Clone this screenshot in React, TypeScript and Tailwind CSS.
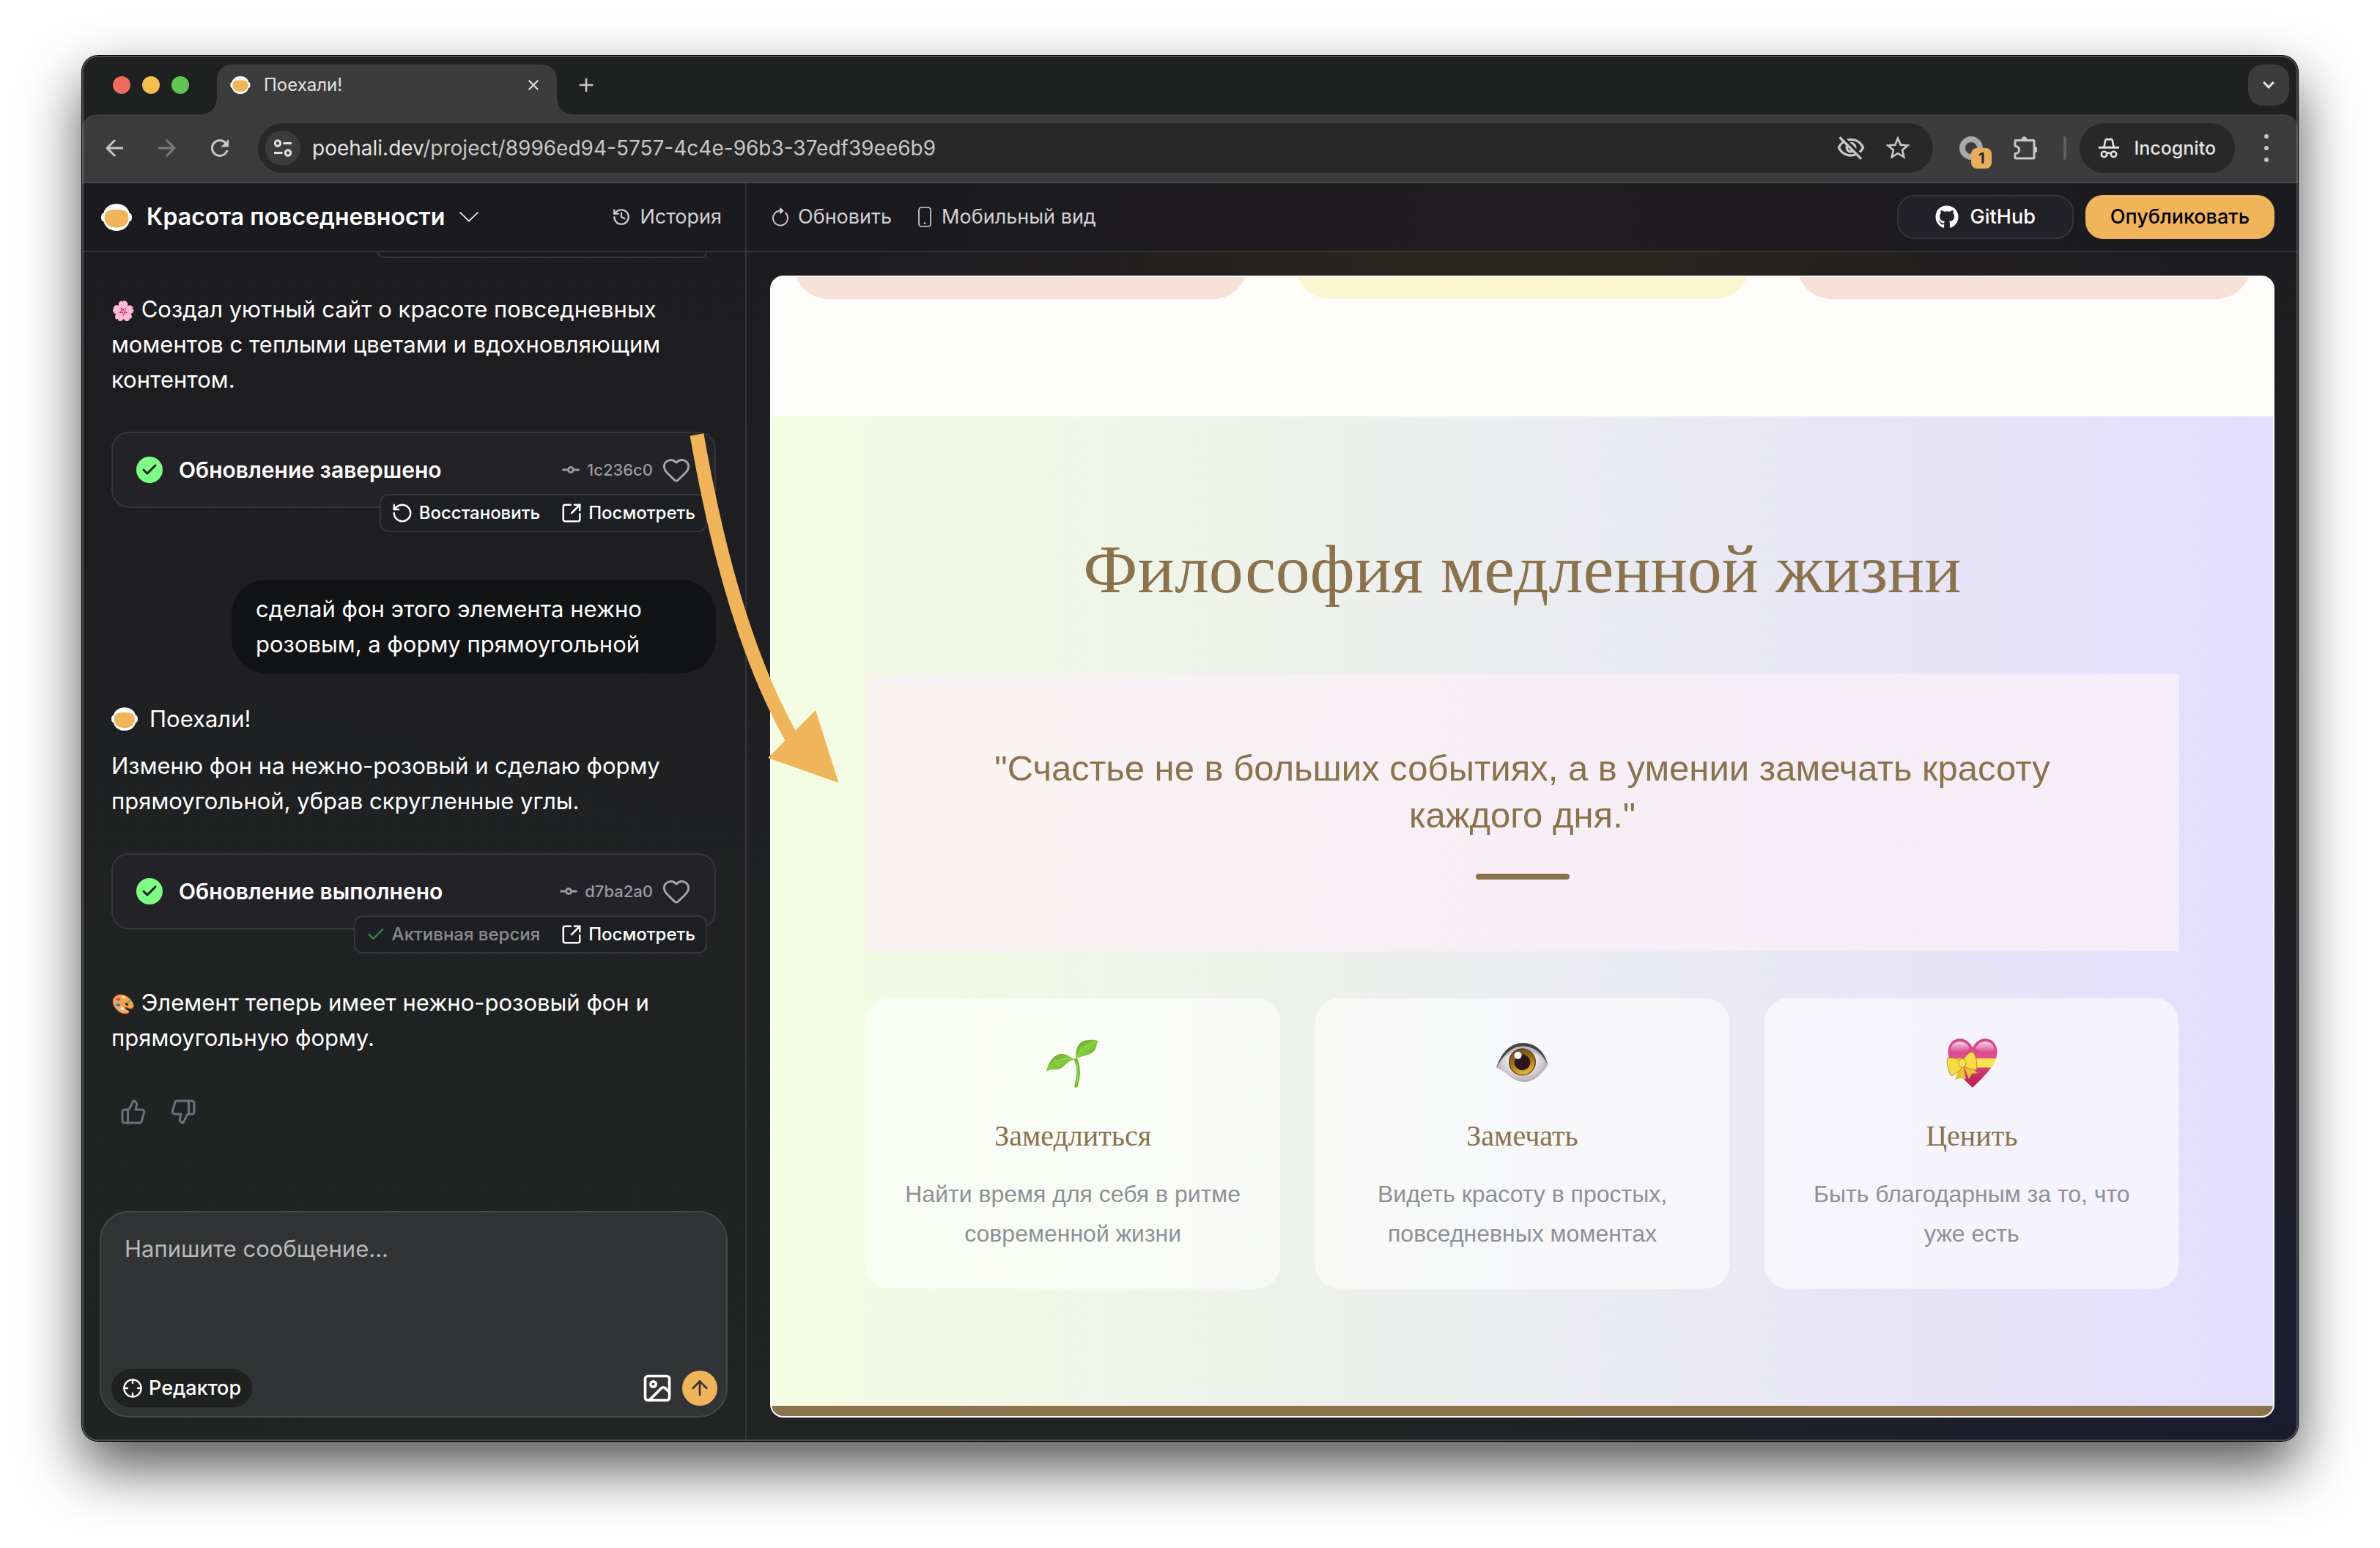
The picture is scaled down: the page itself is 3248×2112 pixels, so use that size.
import React from 'react';
import {
  ArrowUp,
  Check,
  Crosshair,
  GitCommitHorizontal,
  Heart,
  History,
  Image as ImageIcon,
  RotateCcw,
  SquareArrowOutUpRight,
  ThumbsDown,
  ThumbsUp,
} from 'lucide-react';
import { FaGithub } from 'react-icons/fa';
import { MdAdd, MdArrowBack, MdArrowForward, MdClose, MdOutlineVisibilityOff, MdRefresh, MdStarBorder } from 'react-icons/md';

interface IconProps {
  className?: string;
}

const Logo: React.FC<IconProps> = ({ className }) => (
  <svg viewBox="0 0 42 37" className={className} aria-hidden="true">
    <path fill="#fff" d="M21 0C30 0 37 5 38.500 12.500C41 13 42 15 42 18.500C42 22 41 24 38.500 24.500C36.500 32 30 37 21 37C12 37 5.500 32 3.500 24.500C1 24 0 22 0 18.500C0 15 1 13 3.500 12.500C5 5 12 0 21 0Z" />
    <path fill="#f0b45b" d="M21 8C28 8 33 9 35.500 12C38 15.500 38 22 35.500 26C33 30.500 28 32.500 21 32.500C14 32.500 9 30.500 6.500 26C4 22 4 15.500 6.500 12C9 9 14 8 21 8Z" />
  </svg>
);

const TuneIcon: React.FC<IconProps> = ({ className }) => (
  <svg viewBox="0 0 26 26" className={className} fill="none" stroke="currentColor" strokeWidth="3" aria-hidden="true">
    <circle cx="6" cy="6.500" r="3.700" />
    <path d="M13.500 6.500H25M1 19.500h11.500" />
    <circle cx="20" cy="19.500" r="3.700" />
  </svg>
);

const PuzzleIcon: React.FC<IconProps> = ({ className }) => (
  <svg viewBox="0 0 32 32" className={className} fill="none" stroke="currentColor" strokeWidth="3" strokeLinejoin="round" aria-hidden="true">
    <path d="M2 6.500Q2 5.500 3 5.500H27Q28 5.500 28 6.500V29Q28 30 27 30H3Q2 30 2 29V23.500C7 23.500 7.500 21 7.500 18.500C7.500 16 6 13.500 2 13.500Z" />
    <path fill="currentColor" stroke="none" d="M10.500 5C10.500 -1.300 18.500 -1.300 18.500 5ZM29 14C34 14 34 22 29 22Z" />
  </svg>
);

const IncognitoIcon: React.FC<IconProps> = ({ className }) => (
  <svg viewBox="0 0 28 28" className={className} fill="none" stroke="currentColor" strokeWidth="2.600" strokeLinejoin="round" aria-hidden="true">
    <path d="M7.500 12L9.500 2.500Q11.500 1.300 14 2.500Q16.500 1.300 18.500 2.500L20.500 12" />
    <path d="M0 13.200h28" strokeWidth="3" />
    <circle cx="7.500" cy="22.500" r="3.700" />
    <circle cx="20.500" cy="22.500" r="3.700" />
    <path d="M11 21.500Q14 19.500 17 21.500" />
  </svg>
);

const ReloadIcon: React.FC<IconProps> = ({ className }) => (
  <svg viewBox="0 0 24 26" className={className} fill="none" stroke="currentColor" strokeWidth="1.800" strokeLinecap="round" strokeLinejoin="round" aria-hidden="true">
    <path d="M19 7.400A10 10 0 1 1 12 4.500" />
    <path fill="currentColor" d="M12 1.500L15.500 4.700L12 7.800Z" />
  </svg>
);

const PhoneIcon: React.FC<IconProps> = ({ className }) => (
  <svg viewBox="0 0 18 28" className={className} fill="none" stroke="currentColor" strokeWidth="1.700" aria-hidden="true">
    <rect x="1" y="1" width="16" height="26" rx="3.500" />
    <circle cx="9" cy="22.500" r="1.300" fill="currentColor" stroke="none" />
  </svg>
);

const ChevronIcon: React.FC<IconProps> = ({ className }) => (
  <svg viewBox="0 0 26 14" className={className} fill="none" stroke="currentColor" strokeWidth="1.700" strokeLinecap="round" aria-hidden="true">
    <path d="M1 1L13 12.500L25 1" />
  </svg>
);

const Sprout = () => (
  <svg viewBox="84 30 80 74" className="h-[74px] w-20" role="img" aria-label="Росток">
    <defs>
      <linearGradient id="leaf" x1="0" y1="0" x2="1" y2="1">
        <stop offset="0" stopColor="#5c9e26" />
        <stop offset="0.500" stopColor="#86cc3c" />
        <stop offset="1" stopColor="#4f9423" />
      </linearGradient>
    </defs>
    <path fill="none" stroke="#6fb62e" strokeWidth="4.600" strokeLinecap="round" d="M128.500 63C132.500 73 132.500 86 128.500 98.500" />
    <path fill="none" stroke="#9ada53" strokeWidth="1.300" d="M129.500 67C132 76 131.500 88 129 96" />
    <path fill="url(#leaf)" d="M128.500 62C127 48 132 36 146 36C151 35.500 155 36 159 37C156 40 157.500 45 153 51C147 58 134 57 128.500 62Z" />
    <path fill="url(#leaf)" d="M88 79.500C90 68 97 56 108 55C118 54.500 121 61 128 62.500C118 63 114 71 107 75C99 78 93 74 88 79.500Z" />
    <path fill="none" stroke="#a4dd66" strokeWidth="1" d="M129.500 60C134 50 142 43 156 38M90 76C97 65 108 60 123 62M136 51L135 45M142 46L142 41M101 66L99 61M101 66L105 71" />
  </svg>
);

const Eye = () => (
  <svg viewBox="60 34 76 62" className="h-[62px] w-[76px]" role="img" aria-label="Глаз">
    <defs>
      <radialGradient id="white" cx="0.500" cy="0.450" r="0.600">
        <stop offset="0.300" stopColor="#fbfafc" />
        <stop offset="1" stopColor="#ab9ea4" />
      </radialGradient>
      <linearGradient id="iris" x1="0" y1="0" x2="0.300" y2="1">
        <stop offset="0" stopColor="#6d4520" />
        <stop offset="0.550" stopColor="#9b6f1b" />
        <stop offset="1" stopColor="#e0b52c" />
      </linearGradient>
    </defs>
    <path fill="url(#white)" d="M63 72C71 50 84 38 99 38C116 38 128 50 133 69C123 83 114 91 101 91C84 91 76 75 63 72Z" />
    <path fill="#46474b" d="M63 72C70 50 83 38 99 38C117 38 130 50 133.500 69C128 55 116 42.500 99 42.500C84 42.500 73 54 63 72Z" />
    <path fill="#a9a3ba" opacity="0.600" d="M70 62C78 50 87 43 99 43C111 43 121 50 127 59C116 47 83 45 70 62Z" />
    <circle cx="98.500" cy="64" r="18.500" fill="url(#iris)" />
    <circle cx="98.500" cy="64" r="17.800" fill="none" stroke="#5c3d18" strokeWidth="1.200" />
    <circle cx="98.500" cy="64.500" r="10.700" fill="#2b1717" />
    <circle cx="92.500" cy="55" r="5" fill="#fff" />
  </svg>
);

const GiftHeart = () => (
  <svg viewBox="54 20 72 70" className="h-[70px] w-[72px]" role="img" aria-label="Сердце с лентой">
    <defs>
      <linearGradient id="heart" x1="0" y1="0" x2="0" y2="1">
        <stop offset="0" stopColor="#d6408a" />
        <stop offset="0.400" stopColor="#de4f90" />
        <stop offset="1" stopColor="#b51c50" />
      </linearGradient>
      <linearGradient id="shine" x1="0" y1="0" x2="0" y2="1">
        <stop offset="0" stopColor="#fff" stopOpacity="0.800" />
        <stop offset="1" stopColor="#fff" stopOpacity="0" />
      </linearGradient>
    </defs>
    <path fill="url(#heart)" d="M91 34C86 25 79 22 74 22C64 22 57.500 30 57.500 40C57.500 58 78 76 91 89C104 76 124.500 58 124.500 40C124.500 30 118 22 108 22C103 22 96 25 91 34Z" />
    <path fill="url(#shine)" d="M61 38C61 30 67 26 74 26C80 26 85 30 87 36C80 42 66 42 61 38ZM95 36C97 30 102 26 108 26C115 26 121 30 121 38C116 42 102 42 95 36Z" />
    <path fill="#fbe34b" d="M60 49H123.500C122 54 119 58 116 61.500H66C63 58 61 54 60 49Z" />
    <path fill="#e6c234" d="M73 61L67 78L75 76L82 77L79 62ZM80 62L86 77L90 70L98 69L88 61Z" />
    <path fill="#f8dc45" stroke="#b58f1c" strokeWidth="1" d="M76 53C70 49 63 48 57 48.500C55 56 58 66 62 73C68 70 73 66 76 62ZM78 52C81 45 86 41 91 40C96 46 98 56 96 65C90 64 83 62 79 60Z" />
    <ellipse cx="77" cy="55.500" rx="5" ry="6" fill="#fae358" stroke="#b58f1c" strokeWidth="1" />
  </svg>
);

const TitleBar = () => (
  <div className="flex h-20 items-end bg-[#1f2120] pr-3 pl-[42px]">
    <div className="flex gap-4 self-center">
      <span className="size-6 rounded-full bg-[#ed6a5e]" />
      <span className="size-6 rounded-full bg-[#f5bf4f]" />
      <span className="size-6 rounded-full bg-[#61c554]" />
    </div>
    <div className="relative ml-[38px] flex h-[68px] w-[464px] items-center rounded-t-[20px] bg-[#3c3c3c] pr-5 pb-3 pl-[18px] text-[#e3e3e3]">
      <span className="absolute bottom-0 -left-5 size-5 bg-[radial-gradient(circle_at_top_left,#1f2120_19px,#3c3c3c_20px)]" />
      <span className="absolute -right-5 bottom-0 size-5 bg-[radial-gradient(circle_at_top_right,#1f2120_19px,#3c3c3c_20px)]" />
      <Logo className="h-6 w-7" />
      <span className="ml-[18px] text-[24px] leading-8">Поехали!</span>
      <button aria-label="Закрыть вкладку" className="ml-auto"><MdClose className="size-6" /></button>
    </div>
    <button aria-label="Новая вкладка" className="mb-6 ml-6 text-[#c7c7c7]"><MdAdd className="size-8" /></button>
    <button aria-label="Список вкладок" className="mb-3 ml-auto grid size-14 place-items-center rounded-[20px] bg-[#3c3c3c] text-[#e3e3e3]">
      <svg viewBox="0 0 16 10" className="w-4" fill="none" stroke="currentColor" strokeWidth="3"><path d="M1 1L8 8L15 1" /></svg>
    </button>
  </div>
);

const Toolbar = () => (
  <div className="bg-[#1f2120]">
    <div className="flex h-[94px] items-center rounded-t-[20px] border-b-2 border-[#484848] bg-[#3c3c3c] pr-10 pl-[26px] text-[#c7c7c7]">
      <button aria-label="Назад"><MdArrowBack className="size-9" /></button>
      <button aria-label="Вперёд" className="ml-9 text-[#7b7b7b]"><MdArrowForward className="size-9" /></button>
      <button aria-label="Обновить страницу" className="ml-9"><MdRefresh className="size-9" /></button>
      <div className="ml-[34px] flex h-[68px] flex-1 items-center rounded-full bg-[#282828] pr-7 pl-[10px]">
        <span className="grid size-12 shrink-0 place-items-center rounded-full bg-[#3c3c3c] text-[#e3e3e3]"><TuneIcon className="size-[26px]" /></span>
        <p className="ml-4 flex-1 text-[28px] leading-10"><span className="text-[#e3e3e3]">poehali.dev</span>/project/8996ed94-5757-4c4e-96b3-37edf39ee6b9</p>
        <button aria-label="Сторонние cookie заблокированы"><MdOutlineVisibilityOff className="size-10" /></button>
        <button aria-label="Добавить в закладки" className="ml-6"><MdStarBorder className="size-10" /></button>
      </div>
      <div className="relative ml-9">
        <span className="block size-8 rounded-full border-8 border-[#a8a8a8]" />
        <span className="absolute top-4 left-4 grid h-7 w-7 place-items-center rounded-lg bg-[#e8ad5b] text-[20px] leading-6 font-bold text-[#282828]">1</span>
      </div>
      <button aria-label="Расширения" className="ml-[42px]"><PuzzleIcon className="size-8" /></button>
      <span className="ml-9 h-8 w-1 rounded-full bg-[#5f5f5f]" />
      <div className="ml-[18px] flex h-[68px] items-center rounded-full bg-[#282828] px-[26px] text-[#e3e3e3]">
        <IncognitoIcon className="size-7" />
        <span className="ml-5 text-[25px] leading-8 font-medium">Incognito</span>
      </div>
      <button aria-label="Меню" className="ml-10 grid gap-[10px]">
        <span className="size-[6px] rounded-full bg-[#c7c7c7]" />
        <span className="size-[6px] rounded-full bg-[#c7c7c7]" />
        <span className="size-[6px] rounded-full bg-[#c7c7c7]" />
      </button>
    </div>
  </div>
);

const AppHeader = () => (
  <header className="flex h-[94px] border-b-2 border-[#353537] bg-[#1b1a1f]/70 text-[27px] leading-8 text-[#d1d1d6]">
    <div className="flex w-[907px] shrink-0 items-center border-r-2 border-[#353537] pr-8 pl-[26px]">
      <Logo className="h-[37px] w-[42px]" />
      <button className="ml-5 flex items-center gap-5 text-[32px] leading-10 font-semibold text-white">
        Красота повседневности
        <ChevronIcon className="w-[26px]" />
      </button>
      <button className="ml-auto flex items-center gap-3"><History className="size-[26px]" />История</button>
    </div>
    <div className="flex flex-1 items-center pr-8 pl-[34px]">
      <button className="flex items-center gap-3"><ReloadIcon className="h-[26px] w-6" />Обновить</button>
      <button className="ml-9 flex items-center gap-[14px]"><PhoneIcon className="h-7 w-[18px]" />Мобильный вид</button>
      <button className="ml-auto flex h-[60px] items-center gap-4 rounded-[24px] border-2 border-[#36363a] bg-[#222127] px-[50px] font-medium text-white">
        <FaGithub className="size-8" />
        GitHub
      </button>
      <button className="ml-4 h-[60px] rounded-[24px] bg-[#f0b45b] px-[34px] font-medium text-black">Опубликовать</button>
    </div>
  </header>
);

interface UpdateCardProps {
  title: string;
  hash: string;
  active?: boolean;
}

const UpdateCard: React.FC<UpdateCardProps> = ({ title, hash, active }) => (
  <div className="mt-[47px] flex flex-col">
    <div className="flex h-[104px] items-center rounded-[24px] border-2 border-[#363639] bg-[#232227] px-8">
      <span className="grid size-9 place-items-center rounded-full bg-[#7dfc86] text-[#1d1e20]"><Check className="size-6" strokeWidth={3} /></span>
      <h3 className="ml-[22px] text-[30px] leading-10 font-semibold text-white">{title}</h3>
      <GitCommitHorizontal className="ml-auto size-7 text-[#9a9aa2]" strokeWidth={2.500} />
      <span className="ml-2 text-[22px] leading-8 font-medium text-[#9a9aa2]">{hash}</span>
      <button aria-label="Нравится" className="ml-3 text-[#a5a5ab]"><Heart className="size-10" strokeWidth={1.700} /></button>
    </div>
    <div className="z-10 -mt-[19px] mr-3 flex h-[52px] items-center gap-7 self-end rounded-xl border-2 border-[#363639] bg-[#1e1f22] px-[14px] text-[24px] leading-8 font-medium text-white">
      {active ? (
        <span className="flex items-center gap-2 text-[#8b8b8f]"><Check className="size-7 text-[#3f8a4c]" strokeWidth={1.800} />Активная версия</span>
      ) : (
        <button className="flex items-center gap-2"><RotateCcw className="size-[30px]" />Восстановить</button>
      )}
      <button className="flex items-center gap-2"><SquareArrowOutUpRight className="size-[30px]" />Посмотреть</button>
    </div>
  </div>
);

const Chat = () => (
  <aside className="flex w-[907px] shrink-0 flex-col border-r-2 border-[#353537] px-6 pb-8 text-[31px] leading-[48px] text-white">
    <div className="flex flex-1 flex-col px-4">
      <div className="mr-3 h-2 w-[450px] self-end rounded-b-lg border-2 border-t-0 border-[#363639]" />
      <p className="mt-[46px]"><span className="inline-block text-[26px] leading-8">🌸</span> Создал уютный сайт о красоте повседневных моментов с теплыми цветами и вдохновляющим контентом.</p>
      <UpdateCard title="Обновление завершено" hash="1c236c0" />
      <p className="mt-[65px] w-[661px] self-end rounded-[48px] bg-[#121314] py-4 pr-16 pl-[33px]">сделай фон этого элемента нежно розовым, а форму прямоугольной</p>
      <div className="mt-[38px] flex items-center gap-4"><Logo className="h-8 w-9" />Поехали!</div>
      <p className="mt-4">Изменю фон на нежно-розовый и сделаю форму прямоугольной, убрав скругленные углы.</p>
      <UpdateCard title="Обновление выполнено" hash="d7ba2a0" active />
      <p className="mt-[43px]"><span className="inline-block text-[26px] leading-8">🎨</span> Элемент теперь имеет нежно-розовый фон и прямоугольную форму.</p>
      <div className="mt-[59px] flex gap-8 pl-3 text-[#6b7280]">
        <button aria-label="Хороший ответ"><ThumbsUp className="size-9" /></button>
        <button aria-label="Плохой ответ"><ThumbsDown className="size-9" /></button>
      </div>
    </div>
    <form className="flex h-[282px] flex-col rounded-[40px] border-2 border-[#464748] bg-[#323334] pt-[26px] pr-3 pb-3 pl-[14px]">
      <textarea aria-label="Сообщение" placeholder="Напишите сообщение..." className="flex-1 resize-none bg-transparent px-[18px] outline-none placeholder:text-[#b9b9ba]" />
      <div className="flex items-center">
        <button type="button" className="flex h-[52px] items-center gap-2 rounded-full bg-[#1f2020] px-[15px] text-[27px] leading-8 font-medium"><Crosshair className="size-7" />Редактор</button>
        <button type="button" aria-label="Прикрепить изображение" className="ml-auto"><ImageIcon className="size-11" /></button>
        <button type="button" aria-label="Отправить" className="ml-3 grid size-12 place-items-center rounded-full bg-[#f0b45b] text-[#323334]"><ArrowUp className="size-8" /></button>
      </div>
    </form>
  </aside>
);

const features = [
  { icon: <Sprout />, title: 'Замедлиться', text: 'Найти время для себя в ритме современной жизни' },
  { icon: <Eye />, title: 'Замечать', text: 'Видеть красоту в простых, повседневных моментах' },
  { icon: <GiftHeart />, title: 'Ценить', text: 'Быть благодарным за то, что уже есть' },
];

const Preview = () => (
  <main className="flex-1 p-8">
    <div className="overflow-hidden rounded-[18px] border-2 border-white bg-[#fffdfc] font-['Liberation_Sans',sans-serif]">
      <div className="grid h-[30px] grid-cols-3 content-end gap-16 overflow-hidden px-[30px]">
        <div className="h-24 rounded-[48px] bg-[#f8e1d6]" />
        <div className="h-24 rounded-[48px] bg-[#fcf6d0]" />
        <div className="h-24 rounded-[48px] bg-[#f8e1d6]" />
      </div>
      <section className="mt-40 bg-[linear-gradient(to_right,#f4fde2,#edf0ec_38%,#e4deff)] px-8 py-40">
        <div className="mx-auto max-w-[1792px] text-center text-[#8a724c]">
          <h2 className="font-['Liberation_Serif',serif] text-[94px] leading-[96px]">Философия медленной жизни</h2>
          <blockquote className="mt-24 flex flex-col items-center gap-12 bg-[linear-gradient(to_right,#f9f3f2,#f7eff5,#f5edf8)] px-24 pt-24 pb-[98px] text-[49px] leading-[64px]">
            "Счастье не в больших событиях, а в умении замечать красоту каждого дня."
            <span className="h-2 w-32 rounded-full bg-[#8a724c]" />
          </blockquote>
          <div className="mt-16 grid grid-cols-3 gap-12">
            {features.map((f) => (
              <div key={f.title} className="rounded-[32px] bg-white/60 p-12">
                <div className="flex h-20 items-center justify-center">{f.icon}</div>
                <h3 className="mt-8 font-['Liberation_Serif',serif] text-[40px] leading-[56px]">{f.title}</h3>
                <p className="mt-6 text-[32px] leading-[54px] text-[#8f9096]">{f.text}</p>
              </div>
            ))}
          </div>
        </div>
      </section>
      <div className="h-[14px] bg-[#8a724c]" />
    </div>
  </main>
);

// Callout from the chat card to the restyled quote block
const Arrow = () => (
  <svg viewBox="0 0 220 500" className="pointer-events-none absolute top-[500px] left-[818px] z-20 h-[500px] w-[220px]" aria-hidden="true">
    <path fill="none" stroke="#f0b45b" strokeWidth="19" d="M21 17Q68 286 150 430" />
    <path fill="#f0b45b" d="M214.500 492L118 458L183 393Z" />
  </svg>
);

export default function App() {
  return (
    <div className="min-h-screen bg-white px-28 pt-[76px] pb-[144px] font-['Inter',sans-serif]">
      <div className="relative overflow-hidden rounded-[22px] bg-[radial-gradient(ellipse_at_100%_100%,#1a1b2f_0%,transparent_30%),radial-gradient(ellipse_at_0%_100%,#1f2422_0%,transparent_45%),radial-gradient(ellipse_at_65%_12%,#2b2620_0%,transparent_32%),linear-gradient(to_bottom,#1c1b1f,#232424)] shadow-[0_0_0_1px_#000,0_36px_80px_rgba(0,0,0,0.68)]">
        <TitleBar />
        <Toolbar />
        <AppHeader />
        <div className="flex">
          <Chat />
          <Preview />
        </div>
        <Arrow />
        <div className="pointer-events-none absolute inset-0 z-30 rounded-[22px] border-2 border-white/20" />
      </div>
    </div>
  );
}
